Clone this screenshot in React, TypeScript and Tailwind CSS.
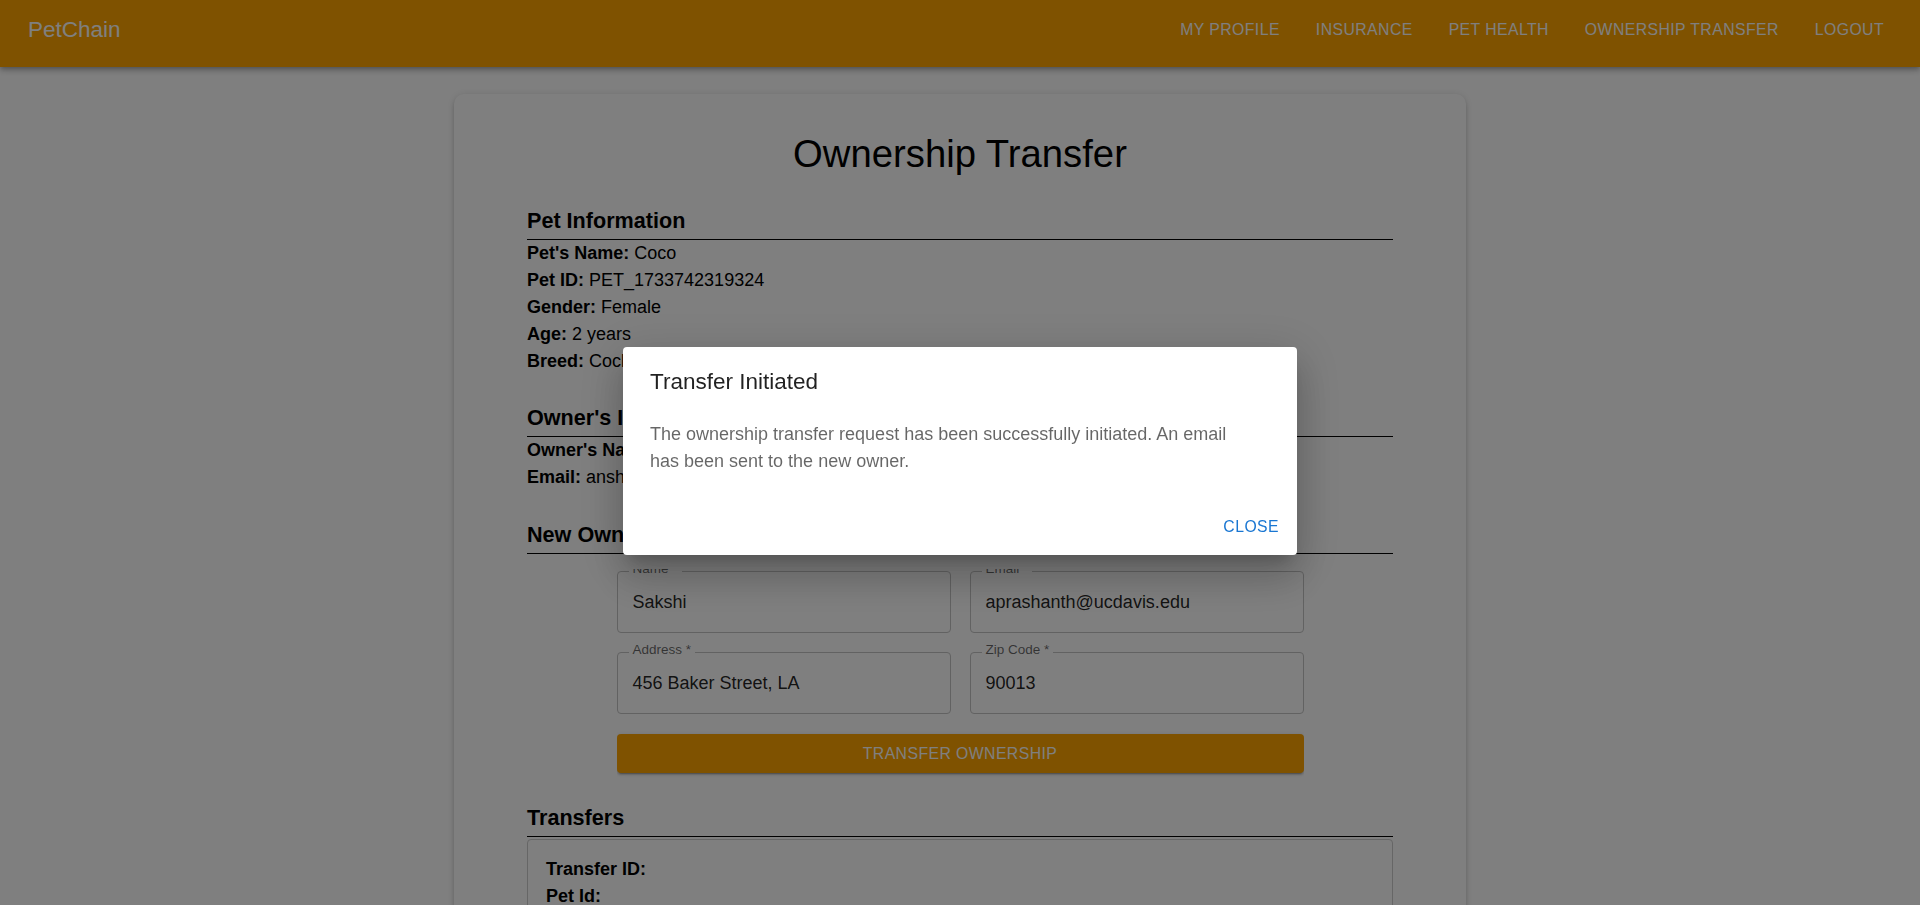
import React from "react";

const navItems = ["My Profile", "Insurance", "Pet Health", "Ownership Transfer", "Logout"];

function Section({
  title,
  className,
  children,
}: {
  title: string;
  className: string;
  children: React.ReactNode;
}) {
  return (
    <section className={className}>
      <h2 className="border-b border-black text-[21.6px] font-bold leading-[36px]">{title}</h2>
      {children}
    </section>
  );
}

function Line({ label, value }: { label: string; value?: string }) {
  return (
    <p className="leading-[1.5]">
      <b>{label}</b>
      {value ? " " + value : ""}
    </p>
  );
}

function Field({ label, value }: { label: string; value: string }) {
  return (
    <div className="relative flex h-[62px] items-center rounded-[4px] border border-[#c4c4c4] px-[15px] text-[18px] text-[rgba(0,0,0,0.87)]">
      <span className="absolute left-[11px] top-[-11px] bg-white px-[4px] text-[13.5px] leading-[1.2] text-[rgba(0,0,0,0.6)]">
        {label}
      </span>
      {value}
    </div>
  );
}

export default function App() {
  return (
    <div className="relative h-screen overflow-hidden bg-white font-['Liberation_Sans',Arial,sans-serif] text-[18px] text-black">
      <header className="relative z-10 flex h-[67px] items-center bg-[#ffa500] pb-[8px] pl-[28px] pr-[28px] text-white shadow-[0_2px_4px_-1px_rgba(0,0,0,0.2),0_4px_5px_0_rgba(0,0,0,0.14),0_1px_10px_0_rgba(0,0,0,0.12)]">
        <div className="text-[22.5px] leading-[1.6]">PetChain</div>
        <nav className="ml-auto flex gap-[20px]">
          {navItems.map((n) => (
            <span
              key={n}
              className="px-[8px] py-[6px] text-[15.75px] uppercase leading-[1.75] tracking-[0.02857em]"
            >
              {n}
            </span>
          ))}
        </nav>
      </header>

      <main className="flex justify-center pt-[27px]">
        <div className="w-[1012px] rounded-[10px] bg-white px-[73px] pb-[40px] pt-[36px] shadow-[0_3px_3px_-2px_rgba(0,0,0,0.2),0_3px_4px_0_rgba(0,0,0,0.14),0_1px_8px_0_rgba(0,0,0,0.12)]">
          <h1 className="text-center text-[38.25px] leading-[1.235]">Ownership Transfer</h1>

          <Section title="Pet Information" className="mt-[26px]">
            <Line label="Pet's Name:" value="Coco" />
            <Line label="Pet ID:" value="PET_1733742319324" />
            <Line label="Gender:" value="Female" />
            <Line label="Age:" value="2 years" />
            <Line label="Breed:" value="Cocker Spaniel" />
          </Section>

          <Section title="Owner's Information" className="mt-[25px]">
            <Line label="Owner's Name:" value="Ansh" />
            <Line label="Email:" value="anshjain@ucdavis.edu" />
          </Section>

          <Section title="New Owner's Information" className="mt-[26px]">
            <div className="mx-auto mt-[15px] w-[687px] overflow-hidden pb-[6px] pt-[2px]">
              <div className="grid grid-cols-2 gap-[19px]">
                <Field label="Name *" value="Sakshi" />
                <Field label="Email *" value="aprashanth@ucdavis.edu" />
                <Field label="Address *" value="456 Baker Street, LA" />
                <Field label="Zip Code *" value="90013" />
              </div>
              <button className="mt-[20px] h-[39px] w-full rounded-[4px] bg-[#ffa500] text-[15.75px] uppercase tracking-[0.02857em] text-white shadow-[0_3px_1px_-2px_rgba(0,0,0,0.2),0_2px_2px_0_rgba(0,0,0,0.14),0_1px_5px_0_rgba(0,0,0,0.12)]">
                Transfer Ownership
              </button>
            </div>
          </Section>

          <Section title="Transfers" className="mt-[21px]">
            <div className="mt-[2px] rounded-[4px] border border-[#cccccc] px-[18px] py-[16px]">
              <Line label="Transfer ID:" />
              <Line label="Pet Id:" />
              <Line label="Current Owner:" />
              <Line label="New Owner:" />
              <Line label="Status:" />
            </div>
          </Section>
        </div>
      </main>

      <div className="fixed inset-0 z-40 bg-black/50" />

      <div className="fixed inset-0 z-50 flex items-center justify-center pb-[3px]">
        <div className="w-[674px] rounded-[4px] bg-white shadow-[0_11px_15px_-7px_rgba(0,0,0,0.2),0_24px_38px_3px_rgba(0,0,0,0.14),0_9px_46px_8px_rgba(0,0,0,0.12)]">
          <h2 className="px-[27px] pb-[21px] pt-[17px] text-[22.5px] leading-[1.6] text-[rgba(0,0,0,0.87)]">
            Transfer Initiated
          </h2>
          <div className="px-[27px] pb-[24px]">
            <p className="max-w-[600px] leading-[1.5] text-[rgba(0,0,0,0.6)]">
              The ownership transfer request has been successfully initiated. An email has been sent to the new owner.
            </p>
          </div>
          <div className="flex justify-end px-[10px] pb-[9px] pt-[8px]">
            <button className="rounded-[4px] px-[8px] py-[6px] text-[15.75px] uppercase leading-[1.75] tracking-[0.02857em] text-[#1976d2]">
              Close
            </button>
          </div>
        </div>
      </div>
    </div>
  );
}
